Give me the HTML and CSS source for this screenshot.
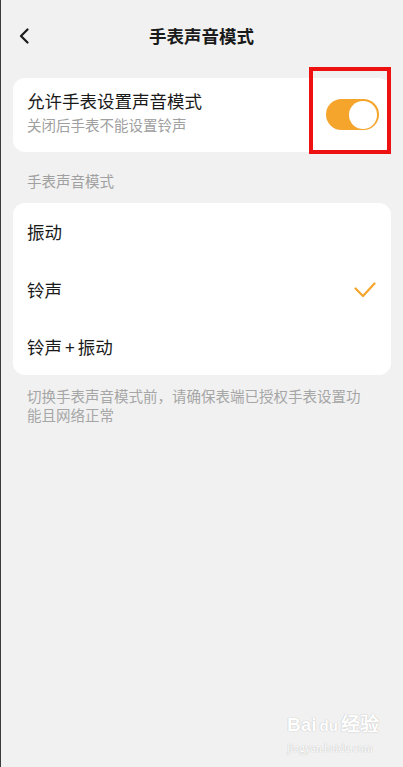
FILE: index.html
```html
<!DOCTYPE html>
<html lang="zh-CN">
<head>
  <meta charset="UTF-8" />
  <meta name="viewport" content="width=device-width, initial-scale=1.0"/>
  <title>手表声音模式</title>
  <link rel="stylesheet" href="styles.css">
</head>
<body>
  <header class="topbar">
    <button class="back" aria-label="返回">
      <svg width="12" height="16" viewBox="0 0 12 16"><path d="M9.5 1.5 L3 8 L9.5 14.5" fill="none" stroke="#1a1a1a" stroke-width="2.2" stroke-linecap="round" stroke-linejoin="round"/></svg>
    </button>
    <h1>手表声音模式</h1>
  </header>

  <main>
    <section class="card switch-card">
      <div class="switch-text">
        <div class="title">允许手表设置声音模式</div>
        <div class="sub">关闭后手表不能设置铃声</div>
      </div>
      <div class="highlight">
        <div class="toggle on"><span class="knob"></span></div>
      </div>
    </section>

    <div class="label">手表声音模式</div>

    <section class="card modes">
      <div class="row">振动</div>
      <div class="row">铃声
        <svg class="check" width="22" height="16" viewBox="0 0 22 16"><path d="M1.5 6.5 L9 14 L20.5 1.5" fill="none" stroke="#f5a52c" stroke-width="2.2" stroke-linecap="round" stroke-linejoin="round"/></svg>
      </div>
      <div class="row">铃声<span class="plus">+</span>振动</div>
    </section>

    <p class="note">切换手表声音模式前，请确保表端已授权手表设置功能且网络正常</p>
  </main>

  <div class="watermark">
    <div class="wm-logo">Bai<span class="paw">du</span>经验</div>
    <div class="wm-url">jingyan.baidu.com</div>
  </div>
</body>
</html>
```

FILE: styles.css
```css
html, body {
  height: 100%;
}

body {
  margin: 0;
  background: #f1f1f1;
  border-left: 1px solid #3c3c3c;
  font-family: "Noto Sans CJK SC", "Noto Sans", sans-serif;
  color: #1a1a1a;
  position: relative;
  overflow: hidden;
}

.topbar {
  position: relative;
  height: 72px;
  display: flex;
  align-items: center;
  justify-content: center;
}

.topbar h1 {
  margin: 0;
  font-size: 17.5px;
  font-weight: bold;
  line-height: 1;
  margin-left: -1px;
}

.back {
  position: absolute;
  left: 16px;
  top: 28px;
  background: none;
  border: none;
  padding: 0;
  width: 14px;
  height: 16px;
}

main {
  padding: 6px 12px 0 12px;
}

.card {
  background: #fff;
  border-radius: 12px;
}

.switch-card {
  display: flex;
  align-items: center;
  justify-content: space-between;
  height: 74px;
  padding-left: 14px;
}

.switch-text {
  padding-bottom: 5.5px;
}

.switch-text .title {
  font-size: 17.5px;
  line-height: 22px;
}

.switch-text .sub {
  font-size: 14.5px;
  color: #a0a0a0;
  line-height: 20px;
  margin-top: 3.5px;
}

/* red frame drawn round the switch */
.highlight {
  border: 4px solid #ee1111;
  width: 61px;
  height: 51px;
  padding: 28px 0 0 13px;
  margin-top: -9px;
  display: flex;
  align-items: flex-start;
}

.toggle {
  width: 53px;
  height: 31px;
  border-radius: 16px;
  background: #f6a52c;
  position: relative;
}

.toggle .knob {
  position: absolute;
  right: 2px;
  top: 1.5px;
  width: 28px;
  height: 28px;
  border-radius: 50%;
  background: #fff;
}

.label {
  font-size: 14.5px;
  color: #a0a0a0;
  padding: 19px 14px 0;
  line-height: 20px;
  height: 32px;
}

.row {
  height: 57.4px;
  display: flex;
  align-items: center;
  padding: 0 15px 0 14px;
  font-size: 17.5px;
}

.row .check {
  margin-left: auto;
  margin-top: 2px;
}

.plus {
  margin: 0 3px;
}

.note {
  margin: 12px 0 0;
  padding: 0 26px 0 14px;
  font-size: 14.5px;
  line-height: 18.5px;
  color: #a6a6a6;
}

.watermark {
  position: absolute;
  left: 286px;
  top: 710px;
  color: #fff;
  text-shadow: 0 0 1px #c4c4c4, 0 0 1px #c4c4c4;
  pointer-events: none;
}

.wm-logo {
  font-family: "Liberation Sans", sans-serif;
  font-size: 19px;
  font-weight: bold;
  line-height: 30px;
  white-space: nowrap;
}

.wm-logo .paw {
  display: inline-block;
  font-size: 15px;
  margin: 0 1px;
  padding: 0 2px;
}

.wm-url {
  font-family: "Liberation Serif", serif;
  font-size: 11.5px;
  line-height: 14px;
}
```
